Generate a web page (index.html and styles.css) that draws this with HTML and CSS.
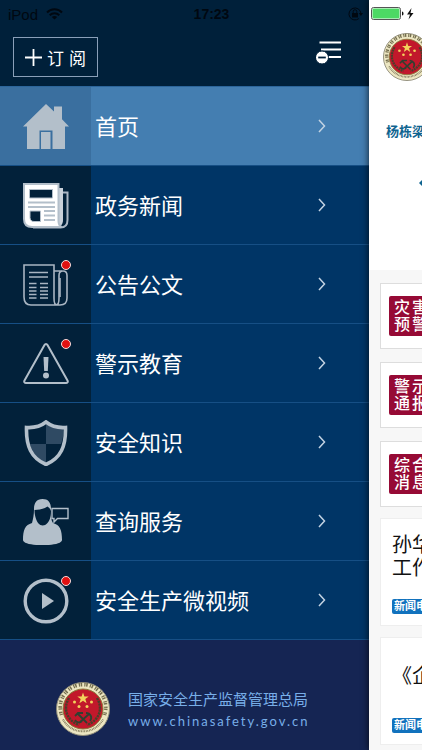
FILE: index.html
```html
<!DOCTYPE html>
<html lang="zh-CN">
<head>
    <meta charset="UTF-8">
    <meta name="viewport" content="width=device-width, initial-scale=1.0">
    <title>国家安全生产监督管理总局</title>
    <link rel="stylesheet" href="styles.css">
</head>
<body>

<!-- emblem, used in the menu footer and in the page header -->
<svg class="defs" width="0" height="0" aria-hidden="true">
    <symbol id="emblem" viewBox="0 0 54 54">
        <circle cx="27" cy="27" r="26.500" fill="#ece6c2" stroke="#8d8a78"/>
        <path d="M5.500 33A22.800 22.800 0 1 1 48.500 33" fill="none" stroke="#4b4527" stroke-width="3.600" stroke-dasharray="1.200 .7 1.500 2.200" opacity=".75"/>
        <path d="M7 37.500A22.800 22.800 0 0 0 47 37.500" fill="none" stroke="#4b4527" stroke-width="2" stroke-dasharray=".8 .8" opacity=".7"/>
        <circle cx="27" cy="27" r="20" fill="#c2182b" stroke="#8a7a3c"/>
        <path d="M27 10.500l1.400 4.100h4.300l-3.400 2.500 1.300 4.200-3.600-2.500-3.600 2.500 1.300-4.200-3.400-2.500h4.300z" fill="#f3d25c"/>
        <g fill="#f3d25c">
            <circle cx="18.500" cy="20" r="1.500"/><circle cx="23" cy="24.500" r="1.500"/>
            <circle cx="31" cy="24.500" r="1.500"/><circle cx="35.500" cy="20" r="1.500"/>
        </g>
        <g fill="none" stroke="#4a3f2a" stroke-width="2.400" stroke-dasharray="2.200 .8">
            <path d="M13 16C7 26 10 38 23 43"/>
            <path d="M41 16C47 26 44 38 31 43"/>
        </g>
        <g fill="none" stroke="#2f4030" stroke-width="1.800">
            <path d="M19 34l3-3h5M22 32l9 9M33 32L23 41M30 31c4 0 7 4 4 8M19 38c2 3 5 3 7 1"/>
        </g>
    </symbol>
</svg>

<div class="app">
    <div class="status">
        <div class="status-left">
            <span>iPod</span>
            <svg width="17" height="12" viewBox="0 0 17 12" fill="none" stroke="currentColor" stroke-width="2">
                <path d="M1 4.500C5 .2 12 .2 16 4.500M3.700 7.200c2.700-2.700 6.900-2.700 9.600 0"/>
                <path d="M8.500 11.500L5.800 8.900c1.500-1.300 3.900-1.300 5.400 0z" fill="currentColor" stroke="none"/>
            </svg>
        </div>
        <span class="status-time">17:23</span>
        <div class="status-right">
            <svg width="15" height="14" viewBox="0 0 15 14" fill="none" stroke="currentColor">
                <path d="M10.800 11.600A6 6 0 1 1 12.900 6"/>
                <path d="M10.800 6h4.200l-2.100 3z" fill="currentColor" stroke="none"/>
                <rect x="4" y="6" width="6" height="4.500" fill="currentColor" stroke="none"/>
                <path d="M5.200 6V4.500a1.800 1.800 0 0 1 3.600 0V6"/>
            </svg>
            <svg width="44" height="14" viewBox="0 0 44 14">
                <rect x=".5" y=".5" width="29" height="12" rx="2" fill="#fff" stroke="#555"/>
                <rect x="1.500" y="1.500" width="27" height="10" rx="1" fill="#4cd964"/>
                <path d="M31 4.500c2 0 2 4 0 4z" fill="#111"/>
                <path d="M40.500 1L36 7.500h3L37.500 12.500 42.500 6h-3z" fill="#111"/>
            </svg>
        </div>
    </div>

    <div class="menu">
        <div class="menu-header">
            <button type="button" class="subscribe">
                <svg width="17" height="17" viewBox="0 0 17 17" stroke="#fff" stroke-width="1.800">
                    <path d="M0 8.500h17M8.500 0v17"/>
                </svg>
                <span>订</span><span>阅</span>
            </button>
            <button type="button" class="edit" aria-label="编辑">
                <svg width="26" height="24" viewBox="0 0 26 24">
                    <path d="M3.500 2.500h21.500M5 9.500h20M4 17h21" stroke="#fff" stroke-width="1.800"/>
                    <circle cx="6" cy="17.500" r="6.500" fill="#fff" stroke="#00203a"/>
                    <path d="M2.200 17.500h7.600" stroke="#00203a" stroke-width="1.800"/>
                </svg>
            </button>
        </div>

        <nav class="nav">
            <a class="item active" href="#">
                <span class="icon">
                    <svg width="46" height="46" viewBox="0 0 46 46" fill="#b3bfca">
                        <path d="M0 22.500L23 0l8 7.500V2.500h8v12.800l7 7.200h-4V45H29.500V26.500h-13V45H4V22.500z"/>
                        <path d="M18 28h9.500v17H18z"/>
                    </svg>
                </span>
                <span class="label">首页</span>
                <svg class="arrow" width="8" height="14" viewBox="0 0 8 14"><path d="M1 1l5.500 6L1 13"/></svg>
            </a>
            <a class="item" href="#">
                <span class="icon">
                    <svg width="46" height="46" viewBox="0 0 46 46">
                        <path d="M38 9.500h6.500V37c0 5-3 7.500-7 7.500H10" fill="none" stroke="#aab6c4" stroke-width="2"/>
                        <path d="M35 5h5v32c0 5-3 7-7 7z" fill="#c9d1da"/>
                        <path d="M1 1h34.500v37c0 3 1 5 3 6H9c-5 0-8-3-8-8z" fill="#fff" stroke="#b3bfca" stroke-width="2"/>
                        <path d="M6.500 6.500h23V15h-23z" fill="#02213a" stroke="#b3bfca"/>
                        <path d="M5 19.500h27M5 24h27M21 28h11M21 32.500h11M21 37h11" stroke="#b3bfca" stroke-width="2"/>
                        <path d="M7 28h10.500v10.500H11c-2.500 0-4-1.500-4-4z" fill="#02213a" stroke="#b3bfca"/>
                    </svg>
                </span>
                <span class="label">政务新闻</span>
                <svg class="arrow" width="8" height="14" viewBox="0 0 8 14"><path d="M1 1l5.500 6L1 13"/></svg>
            </a>
            <a class="item" href="#">
                <span class="icon">
                    <svg width="46" height="46" viewBox="0 0 46 46" fill="none" stroke="#a9b5c2" stroke-width="1.600">
                        <path d="M31 36V3H1v32c0 5 2.500 8 7 8h29c5 0 7-3 7-7V13.500c0-6-8-6-8 0V36c0 9-5 9-5 0V9h8"/>
                        <path d="M6 10.500h19M6 15h19M6 21.500h7.500M17 21.500h8M6 25.500h7.500M17 25.500h8M6 29h7.500M17 29h8M6 32.500h7.500M17 32.500h8M6 36h7.500M17 36h8"/>
                        <path d="M37 16v19"/>
                    </svg>
                    <i class="dot"></i>
                </span>
                <span class="label">公告公文</span>
                <svg class="arrow" width="8" height="14" viewBox="0 0 8 14"><path d="M1 1l5.500 6L1 13"/></svg>
            </a>
            <a class="item" href="#">
                <span class="icon">
                    <svg width="46" height="46" viewBox="0 0 46 46">
                        <path d="M21.500 4c.7-1.300 2.300-1.300 3 0l20 35.500c.7 1.200 0 2.500-1.500 2.500H3c-1.500 0-2.200-1.300-1.500-2.500z" fill="none" stroke="#b3bfca" stroke-width="2"/>
                        <path d="M20.500 16h5l-.7 14h-3.600z" fill="#b3bfca"/>
                        <circle cx="23" cy="34.500" r="3" fill="#b3bfca"/>
                    </svg>
                    <i class="dot"></i>
                </span>
                <span class="label">警示教育</span>
                <svg class="arrow" width="8" height="14" viewBox="0 0 8 14"><path d="M1 1l5.500 6L1 13"/></svg>
            </a>
            <a class="item" href="#">
                <span class="icon">
                    <svg width="46" height="46" viewBox="0 0 46 46">
                        <path d="M23 4v20h15c2-5 3-11 2.500-16C34 9 27 7 23 4z" fill="#2f4a63"/>
                        <path d="M23 24H7c2 9 8 15 16 19z" fill="#2f4a63"/>
                        <path d="M23 2c5 4 12 6 19.500 5.500C43 26 38 38 23 44.500 8 38 3 26 3.500 7.500 11 8 18 6 23 2z" fill="none" stroke="#b3bfca" stroke-width="3.600"/>
                    </svg>
                </span>
                <span class="label">安全知识</span>
                <svg class="arrow" width="8" height="14" viewBox="0 0 8 14"><path d="M1 1l5.500 6L1 13"/></svg>
            </a>
            <a class="item" href="#">
                <span class="icon">
                    <svg width="46" height="46" viewBox="0 0 46 46">
                        <path d="M19.500 0C13.500 0 11 4 11 10c0 6-1 10-2 14-7 2-9 7-9 17 0 7 39 7 39 0 0-10-2-15-9-17-1.500-2-2-5-2-8C29 4 26 0 19.500 0z" fill="#b3bfca"/>
                        <path d="M11.500 11c5 0 10-1.500 13-3.500 1.500 1 3 2.500 3.500 4.500 0 7-2 10.500-4 12.500-2 2.500-6.500 2.500-8.500 0C13.500 22 11.500 17 11.500 11z" fill="#02213a"/>
                        <path d="M29 9.500h16v10H34.500L31 23v-3.500h-2z" fill="#02213a" stroke="#b3bfca" stroke-width="1.400"/>
                    </svg>
                </span>
                <span class="label">查询服务</span>
                <svg class="arrow" width="8" height="14" viewBox="0 0 8 14"><path d="M1 1l5.500 6L1 13"/></svg>
            </a>
            <a class="item" href="#">
                <span class="icon">
                    <svg width="46" height="46" viewBox="0 0 46 46">
                        <circle cx="23" cy="23" r="20.800" fill="none" stroke="#b3bfca" stroke-width="3.400"/>
                        <path d="M19 15l12 8-12 8z" fill="#b3bfca"/>
                    </svg>
                    <i class="dot"></i>
                </span>
                <span class="label">安全生产微视频</span>
                <svg class="arrow" width="8" height="14" viewBox="0 0 8 14"><path d="M1 1l5.500 6L1 13"/></svg>
            </a>
        </nav>

        <div class="menu-footer">
            <svg class="footer-logo" width="54" height="54"><use href="#emblem"/></svg>
            <div class="footer-text">
                <div class="org">国家安全生产监督管理总局</div>
                <div class="site">www.chinasafety.gov.cn</div>
            </div>
        </div>
    </div>

    <!-- main page, pushed aside by the open menu -->
    <div class="page">
        <div class="page-top">
            <svg class="page-logo" width="48" height="48"><use href="#emblem"/></svg>
            <div class="headline">杨栋梁</div>
            <svg class="marker" width="10" height="10" viewBox="0 0 10 10"><path d="M0 5l4-4 5 4-5 4z" fill="#0f6490"/></svg>
        </div>
        <div class="alerts">
            <div class="card"><div class="badge">灾害<br>预警</div></div>
            <div class="card"><div class="badge">警示<br>通报</div></div>
            <div class="card"><div class="badge">综合<br>消息</div></div>
        </div>
        <div class="news-list">
            <div class="card news">
                <div class="title">孙华<br>工作</div>
                <span class="tag">新闻电</span>
            </div>
            <div class="card news">
                <div class="title">《企</div>
                <span class="tag">新闻电</span>
            </div>
        </div>
    </div>
</div>

</body>
</html>
```
FILE: styles.css
```css
* {
    box-sizing: border-box;
}
body {
    margin: 0;
    font-family: "Liberation Sans", "Noto Sans CJK SC", sans-serif;
    background-color: #f7f7f7;
}
.defs {
    position: absolute;
}
svg {
    display: block;
    flex-shrink: 0;
}
.app {
    position: relative;
    display: flex;
    min-height: 100vh;
    overflow: hidden;
}

/* status bar */
.status {
    position: absolute;
    top: 4px;
    left: 0;
    right: 0;
    z-index: 3;
    display: grid;
    grid-template-columns: 1fr auto 1fr;
    align-items: center;
    height: 20px;
    padding: 0 7px 0 8px;
    font-size: 15px;
    color: #000811;
}
.status-left, .status-right {
    display: flex;
    align-items: center;
    gap: 8px;
}
.status-right {
    justify-content: flex-end;
}
.status-time {
    font-size: 14px;
    font-weight: bold;
}

/* menu */
.menu {
    flex: 1;
    display: flex;
    flex-direction: column;
    background-color: #152553;
}
.menu-header {
    display: flex;
    align-items: flex-end;
    justify-content: space-between;
    height: 87px;
    padding: 0 27px 9px 13px;
    background-color: #00203a;
    border-bottom: 1px solid #2c659a;
}
.subscribe {
    display: flex;
    align-items: center;
    justify-content: center;
    gap: 5px;
    width: 85px;
    height: 40px;
    padding: 0;
    background: none;
    border: 1px solid #8a9fb8;
    color: #fff;
    font-family: inherit;
    font-size: 17px;
}
.edit {
    padding: 0 0 13px;
    background: none;
    border: none;
}
.item {
    display: flex;
    align-items: center;
    height: 79px;
    padding-right: 43px;
    background-color: #003566;
    border-bottom: 1px solid #164f85;
    color: #fff;
    text-decoration: none;
}
.icon {
    position: relative;
    display: flex;
    align-items: center;
    justify-content: center;
    width: 91px;
    height: 100%;
    padding-top: 2px;
    background-color: #02213a;
}
.active {
    background-color: #447eb1;
}
.active .icon {
    background-color: #3a6f9f;
}
.dot {
    position: absolute;
    top: 15px;
    right: 20px;
    width: 10px;
    height: 10px;
    background-color: #e01010;
    border: 1px solid #f5dcdc;
    border-radius: 50%;
}
.label {
    flex: 1;
    padding: 3px 0 0 4px;
    font-size: 22px;
    line-height: 32px;
}
.arrow {
    fill: none;
    stroke: #c3d3e3;
    stroke-width: 1.5px;
}
.menu-footer {
    flex: 1;
    display: flex;
    align-items: center;
    gap: 18px;
    padding: 28px 20px 0 56px;
    color: #78aee8;
}
.footer-text {
    padding-top: 2px;
}
.org {
    font-size: 15px;
    line-height: 22px;
}
.site {
    font-family: Lato, sans-serif;
    font-size: 13px;
    line-height: 20px;
    letter-spacing: 2px;
}

/* page */
.page {
    position: relative;
    z-index: 2;
    width: 53px;
    overflow: hidden;
    white-space: nowrap;
    background-color: #f7f7f7;
    box-shadow: 0 0 7px rgba(0, 0, 0, 0.8);
}
.page-top {
    height: 270px;
    padding: 33px 0 0 14px;
    background-color: #fff;
}
.headline {
    padding: 41px 0 0 3px;
    font-size: 13px;
    font-weight: bold;
    line-height: 20px;
    color: #0f6490;
}
.marker {
    margin: 36px 0 0 36px;
}
.alerts, .news-list {
    display: flex;
    flex-direction: column;
    gap: 13px;
    padding: 13px 0 0 11px;
}
.news-list {
    gap: 11px;
    padding: 11px 0 5px 11px;
}
.card {
    width: 300px;
    height: 66px;
    padding: 12px 8px;
    background-color: #fff;
    border: 1px solid #ddd;
}
.badge {
    width: 60px;
    height: 40px;
    padding: 3px 5px;
    border-radius: 2px;
    background-color: #960a35;
    color: #fff;
    font-size: 16px;
    font-weight: 500;
    line-height: 17px;
    letter-spacing: 2px;
}
.news {
    display: flex;
    flex-direction: column;
    align-items: flex-start;
    justify-content: space-between;
    height: 108px;
    padding: 14px 11px 11px;
    border-color: #eee;
}
.title {
    display: flex;
    align-items: center;
    height: 48px;
    font-size: 20px;
    line-height: 23px;
    color: #111;
}
.tag {
    padding: 0 2px;
    border-radius: 2px;
    background-color: #1272bd;
    color: #fff;
    font-size: 11px;
    font-weight: bold;
    line-height: 15px;
}
```
